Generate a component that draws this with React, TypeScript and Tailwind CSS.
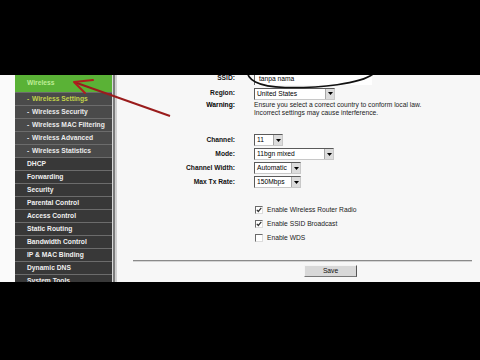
import React from "react";

const subItems = [
  "Wireless Settings",
  "Wireless Security",
  "Wireless MAC Filtering",
  "Wireless Advanced",
  "Wireless Statistics",
];
const mainItems = [
  "DHCP",
  "Forwarding",
  "Security",
  "Parental Control",
  "Access Control",
  "Static Routing",
  "Bandwidth Control",
  "IP & MAC Binding",
  "Dynamic DNS",
  "System Tools",
];

function Arrow() {
  return (
    <span className="flex h-full w-[9px] items-center justify-center border-l border-[#a8a8a8] bg-[#dcdcdc]">
      <svg width="5" height="3" viewBox="0 0 5 3">
        <path d="M0 0 L5 0 L2.5 3 Z" fill="#000" />
      </svg>
    </span>
  );
}

function Select({ text, className }: { text: string; className: string }) {
  return (
    <div
      className={
        "flex h-[12px] items-center border border-t-[#5a5a5a] border-l-[#5a5a5a] border-r-[#c8c8c8] border-b-[#c8c8c8] bg-white " +
        className
      }
    >
      <span className="flex-1 overflow-hidden whitespace-nowrap pl-[2px] leading-[10px] text-black">
        {text}
      </span>
      <Arrow />
    </div>
  );
}

function Check({ on }: { on: boolean }) {
  return (
    <span className="flex h-[8px] w-[8px] items-center justify-center border border-t-[#6a6a6a] border-l-[#6a6a6a] border-r-[#dcdcdc] border-b-[#dcdcdc] bg-white">
      {on && (
        <svg width="6" height="6" viewBox="0 0 6 6">
          <path d="M0.8 2.8 L2.3 4.5 L5.3 0.8" stroke="#333" strokeWidth="1.2" fill="none" />
        </svg>
      )}
    </span>
  );
}

function Row({ label, children, h = "h-[14px]" }: { label: string; children: React.ReactNode; h?: string }) {
  return (
    <div className={"flex items-center " + h}>
      <div className="w-[118px] whitespace-nowrap text-right font-bold text-[#111]">{label}</div>
      <div className="ml-[19px] flex items-center">{children}</div>
    </div>
  );
}

export default function App() {
  return (
    <div className="relative h-[360px] w-[480px] overflow-hidden bg-black font-['Liberation_Sans',Arial,sans-serif] text-[6.7px]">
      <div className="h-[75px]" />
      <div className="flex h-[207px] overflow-hidden">
        <div className="w-[15px] bg-[#fafafa]" />
        <nav className="flex w-[97px] flex-col bg-[#3a3a3a] font-bold">
          <div className="flex h-[17px] shrink-0 items-center bg-[#5ab236] pl-[12px] text-[#bfee96]">Wireless</div>
          {subItems.map((t, i) => (
            <div
              key={t}
              className={
                "flex h-[13px] shrink-0 items-center border-t border-[#6c6c6c] bg-[#4a4a4a] pl-[12px] " +
                (i === 0 ? "text-[#c2d44a]" : "text-[#ececec]")
              }
            >
              <span className="w-[5px]">-</span>
              <span>{t}</span>
            </div>
          ))}
          {mainItems.map((t) => (
            <div
              key={t}
              className="flex h-[13px] shrink-0 items-center border-t border-[#6c6c6c] bg-[#383838] pl-[12px] text-[#f0f0f0]"
            >
              {t}
            </div>
          ))}
        </nav>
        <div className="w-[1px] bg-[#dadada]" />
        <div className="w-[2px] bg-[#7c7c7c]" />
        <div className="w-[2px] bg-[#d0d0d0]" />
        <main className="flex-1 bg-[#f7f7f7] text-black">
          <div className="-mt-[3px] flex flex-col">
            <Row label="SSID:" h="h-[13px]">
              <div className="flex h-[12px] w-[118px] items-center border-l border-t border-[#6a6a6a] bg-white pl-[4px]">
                tanpa nama
              </div>
            </Row>
            <div className="mt-[2px]">
              <Row label="Region:" h="h-[13px]">
                <Select text="United States" className="w-[81px]" />
              </Row>
            </div>
            <div className="mt-[1px] flex items-start leading-[8px]">
              <div className="w-[118px] text-right font-bold">Warning:</div>
              <div className="ml-[19px] text-[#222]">
                <div>Ensure you select a correct country to conform local law.</div>
                <div>Incorrect settings may cause interference.</div>
              </div>
            </div>
            <div className="mt-[16px]">
              <Row label="Channel:">
                <Select text="11" className="w-[29px]" />
              </Row>
              <Row label="Mode:">
                <Select text="11bgn mixed" className="w-[80px]" />
              </Row>
              <Row label="Channel Width:">
                <Select text="Automatic" className="w-[47px]" />
              </Row>
              <Row label="Max Tx Rate:">
                <Select text="150Mbps" className="w-[47px]" />
              </Row>
            </div>
            <div className="mt-[14px] flex flex-col pl-[138px] text-[#222]">
              {[
                ["Enable Wireless Router Radio", true],
                ["Enable SSID Broadcast", true],
                ["Enable WDS", false],
              ].map(([t, on]) => (
                <div key={t as string} className="flex h-[14px] items-center gap-[4px]">
                  <Check on={on as boolean} />
                  <span>{t as string}</span>
                </div>
              ))}
            </div>
            <div className="ml-[16px] mr-[8px] mt-[15px] h-[1px] bg-[#8a8a8a]" />
            <div className="ml-[16px] mr-[8px] h-[1px] bg-[#d4d4d4]" />
            <div className="ml-[187px] mt-[3px] flex h-[12px] w-[53px] items-center justify-center border border-t-[#f4f4f4] border-l-[#f4f4f4] border-r-[#555] border-b-[#777] bg-[#d8d8d8] text-[#111]">
              Save
            </div>
          </div>
        </main>
      </div>
      <div className="h-[78px]" />
      <svg className="pointer-events-none absolute left-0 top-0" width="480" height="360" viewBox="0 0 480 360">
        <path
          d="M247 68 C246 80 258 87 285 87.5 C320 88 360 84 373 74 L376 66"
          stroke="#111"
          strokeWidth="1.6"
          fill="none"
        />
        <path d="M170 116 L74 82" stroke="#9a1c1c" strokeWidth="2" fill="none" />
        <path d="M74 82 L93 80 M74 82 L85 93" stroke="#b01e1e" strokeWidth="2" fill="none" strokeLinecap="round" />
      </svg>
      <div className="absolute left-0 top-0 h-[75px] w-[480px] bg-black" />
      <div className="absolute left-0 top-[282px] h-[78px] w-[480px] bg-black" />
    </div>
  );
}
